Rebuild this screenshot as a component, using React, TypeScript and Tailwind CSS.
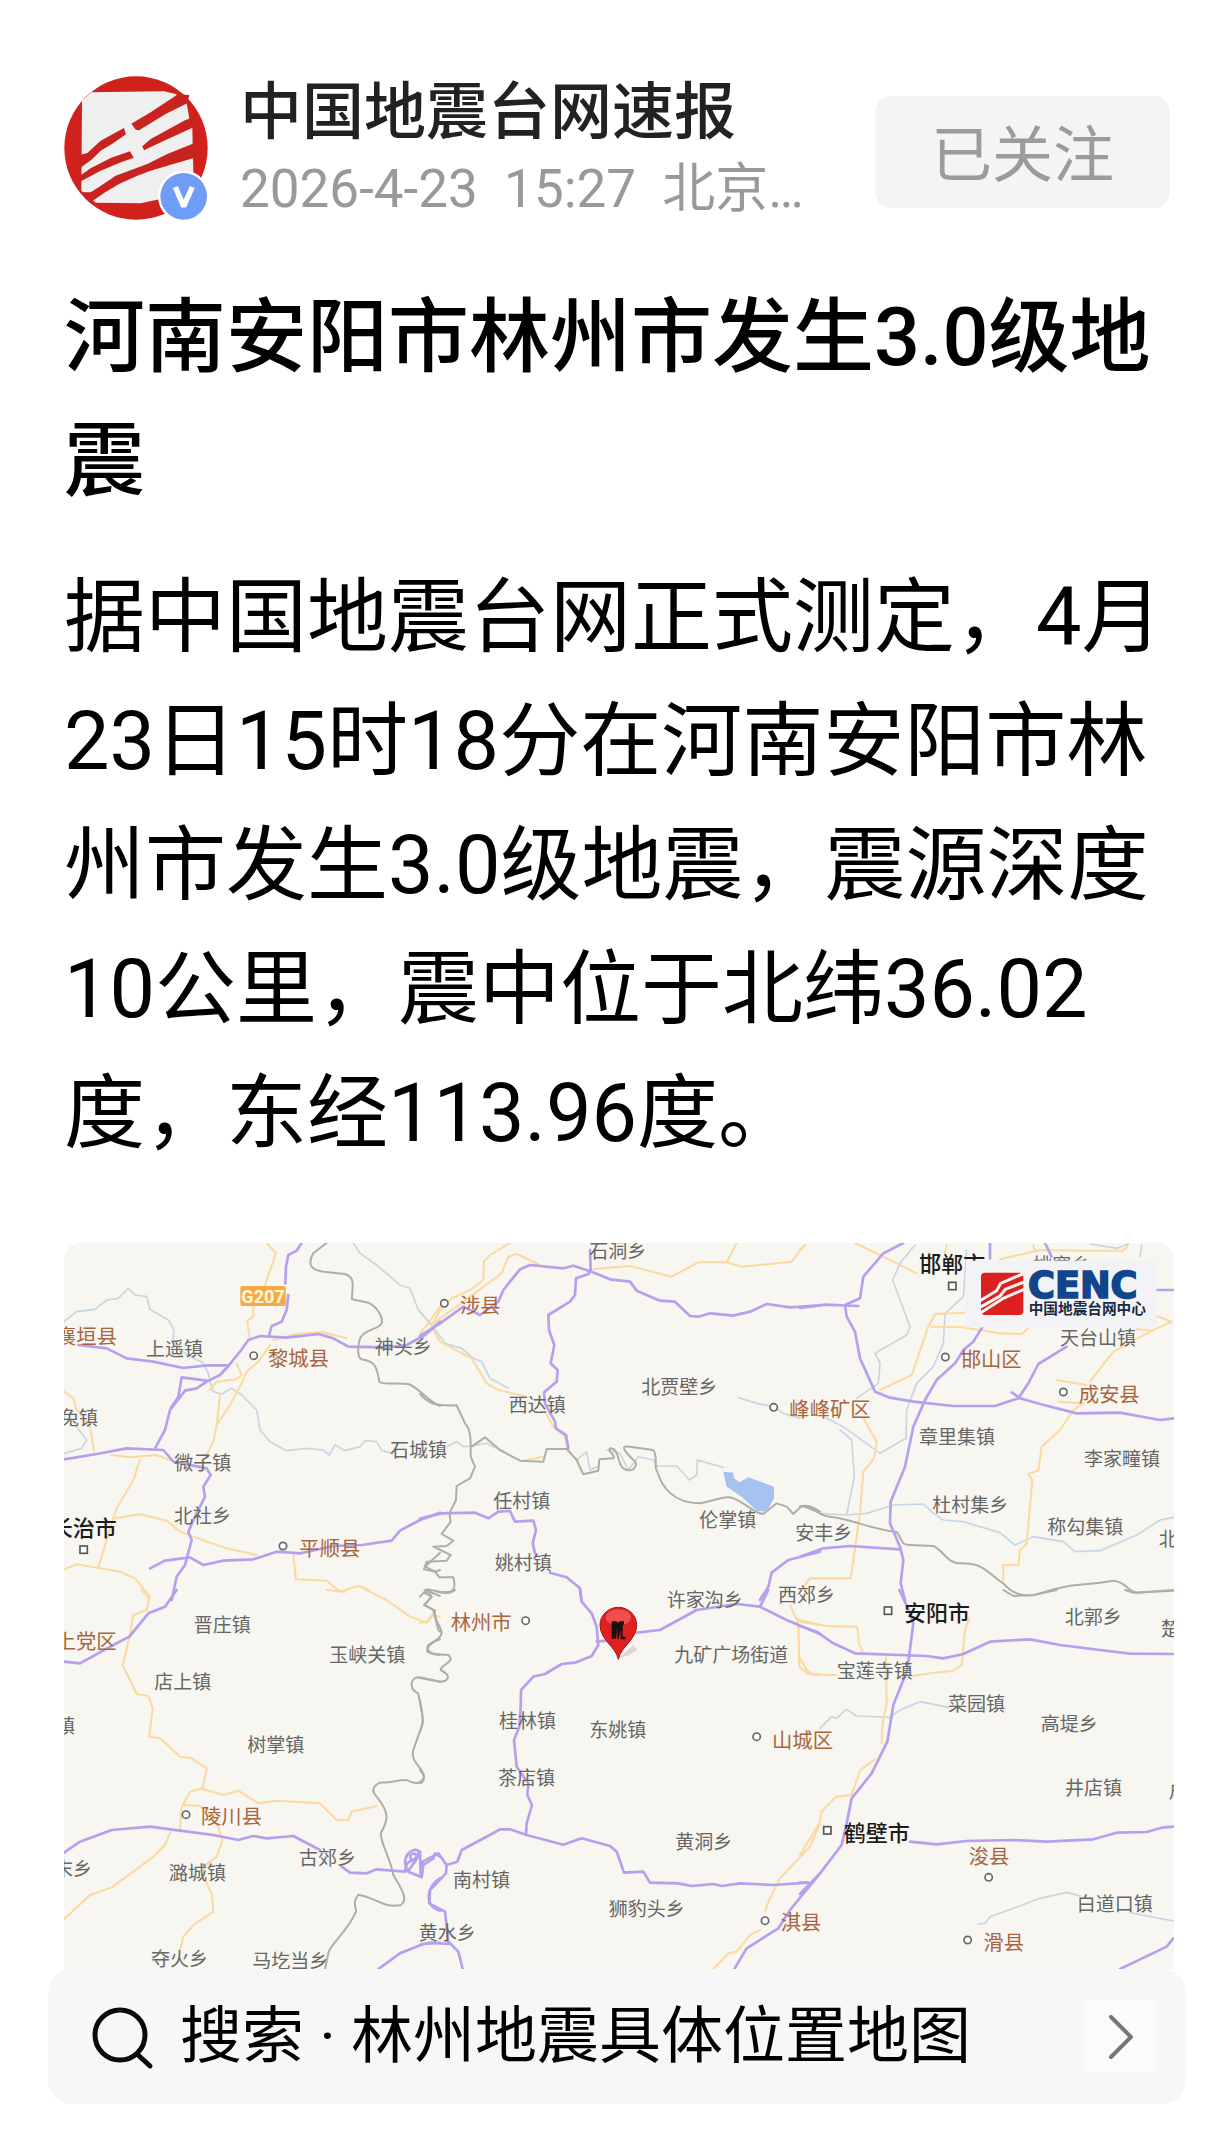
import { type ReactNode } from 'react';

type RoadKind = 'highway' | 'road' | 'border' | 'river';
type PlaceKind = 'town' | 'county' | 'city';

interface Line {
  kind: RoadKind;
  d: string;
}

interface Place {
  kind: PlaceKind;
  name: string;
  x: number;
  y: number;
}

interface Mark {
  shape: 'circle' | 'square';
  x: number;
  y: number;
}

interface Tile {
  id: string;
  x: number;
  y: number;
  lines: Line[];
  places: Place[];
  marks: Mark[];
}

const lineStyle: Record<RoadKind, string> = {
  highway: 'stroke-[#b6a0ee] stroke-[8px]',
  road: 'stroke-[#fbd9a0] stroke-[6px]',
  border: 'stroke-[#aeafa4] stroke-[6px]',
  river: 'stroke-[#c8d6e4] stroke-[5px]',
};

const placeStyle: Record<PlaceKind, string> = {
  town: 'fill-[#666666] text-[57px]',
  county: 'fill-[#a8653f] text-[61px]',
  city: 'fill-[#1c1c1c] text-[66px] font-medium',
};

const lineOrder: RoadKind[] = ['river', 'road', 'border', 'highway'];

const tiles: Tile[] = [
  {
    id: 'nw',
    x: -72,
    y: -39,
    lines: [
      { kind: 'river', d: 'M72 275L110 245L165 238L200 210L235 205L265 175L285 195L320 200L330 238L385 270L402 300L398 335L440 375L490 398L505 430L512 460L520 485L545 492L575 475L605 495L650 540L660 600L690 635L740 662L800 655L850 660L868 675L885 645L915 662L960 650L975 632L1010 635L1025 662L1050 668' },
      { kind: 'river', d: 'M940 39L960 70L1010 105L1080 165L1110 175L1135 240L1170 280' },
      { kind: 'river', d: 'M110 590L140 630L125 655L72 670' },
      { kind: 'road', d: 'M680 39L708 70L690 120L675 165M640 230L640 260L622 272L628 320' },
      { kind: 'road', d: 'M1200 230L1165 280L1140 310' },
      { kind: 'road', d: 'M700 330L770 312L845 306L920 325M690 345L655 395L620 425L605 460L570 525L530 585L520 635L500 675M540 490L530 590' },
      { kind: 'road', d: 'M590 400L605 435L590 448L530 455L510 480' },
      { kind: 'road', d: 'M72 485L100 505L108 535L150 590L162 665M215 675L270 682L350 675L400 695M300 690L280 750L230 835L218 870L200 930L175 1012' },
      { kind: 'road', d: 'M225 865L300 853L380 872L420 905L500 935L560 955L650 975' },
      { kind: 'road', d: 'M72 1018L110 1003L175 1014L240 1025L285 1045L330 1100' },
      { kind: 'road', d: 'M760 975L768 1048L860 1052L900 1085' },
      { kind: 'road', d: 'M900 1085L955 1068L985 1080' },
      { kind: 'border', d: 'M860 39L820 70C800 105 815 120 850 125L915 132C950 145 935 170 936 208L985 218C1010 230 1030 260 1025 280C1015 300 975 295 960 325C950 360 955 385 965 388C1010 395 1010 415 1018 455C1030 465 1060 458 1105 462C1140 475 1165 515 1200 528' },
      { kind: 'border', d: 'M1200 968L1155 1010L1185 1025L1200 1020M1200 1098L1155 1080' },
      { kind: 'highway', d: 'M785 39L770 62L745 75L738 110L736 160M745 195L740 240L725 275L695 288L687 318' },
      { kind: 'highway', d: 'M115 345L200 355L260 385L340 395L430 414L500 406L565 406' },
      { kind: 'highway', d: 'M1200 275L1155 315L1100 345L1040 352L925 350L880 325L835 312L740 323L660 318L625 330L600 365L565 408L540 435L500 455L470 475L435 482L390 540L375 600L345 655' },
      { kind: 'highway', d: 'M500 452L425 442L415 500L392 535' },
      { kind: 'highway', d: 'M72 688L170 672L260 655L370 660L400 695L500 715L512 735L490 770L495 800L465 860L445 905L455 930L435 1005L410 1040L395 1110' },
      { kind: 'highway', d: 'M330 1015L375 992L450 982L490 1005L550 992L640 988L710 965L780 970L880 948L965 945L1055 932L1080 902L1140 870L1200 848' },
    ],
    places: [
      { kind: 'county', name: '襄垣县', x: 48, y: 322 },
      { kind: 'town', name: '上遥镇', x: 318, y: 358 },
      { kind: 'county', name: '黎城县', x: 684, y: 386 },
      { kind: 'town', name: '神头乡', x: 1004, y: 350 },
      { kind: 'town', name: '兔镇', x: 60, y: 565 },
      { kind: 'town', name: '微子镇', x: 403, y: 699 },
      { kind: 'town', name: '石城镇', x: 1050, y: 660 },
      { kind: 'town', name: '北社乡', x: 402, y: 858 },
      { kind: 'city', name: '长治市', x: 32, y: 896 },
      { kind: 'county', name: '平顺县', x: 778, y: 957 },
    ],
    marks: [
      { shape: 'circle', x: 641, y: 377 },
      { shape: 'square', x: 131, y: 959 },
      { shape: 'circle', x: 729, y: 948 },
    ],
  },
  {
    id: 'n',
    x: 1068,
    y: -39,
    lines: [
      { kind: 'river', d: 'M0 245L35 285L75 340L125 355L160 385L185 395L210 445L265 475' },
      { kind: 'river', d: 'M80 650L110 635L130 650L155 648L200 640L250 665' },
      { kind: 'river', d: 'M470 690L500 665L510 720L530 710M560 660L600 670L625 720L655 680L700 690L712 708L770 708L808 750L830 735L832 690L910 712' },
      { kind: 'river', d: 'M955 502L1010 520L1060 530L1090 550L1140 565' },
      { kind: 'road', d: 'M270 39L210 75L192 95L190 150L150 180L95 205L60 240L35 290L60 335L155 385L200 460L235 480L320 500' },
      { kind: 'road', d: 'M40 280L130 215L245 130L265 80L290 72L360 105M515 118L630 108L755 140L835 97L920 97L965 110L1115 95L1150 50M950 39L920 97' },
      { kind: 'road', d: 'M375 545L400 590L435 620L440 650M310 692L370 680' },
      { kind: 'road', d: 'M1150 1070L1170 1045L1200 1045' },
      { kind: 'border', d: 'M0 492C30 525 50 528 110 526L135 580C155 600 152 640 152 680L165 710L150 745L110 768L108 810L88 850L92 875L65 912L100 932L80 948L40 950L92 975L80 992L20 995L12 1018L45 1025L58 1042L100 1042C110 1080 100 1090 60 1085L20 1078L0 1100' },
      { kind: 'border', d: 'M155 650L195 622L240 660L300 692L370 695L380 657L440 657L470 690L490 733L535 722L538 688L580 685C590 675 560 665 570 655C600 655 590 700 610 715C640 735 660 700 640 690C600 650 605 645 640 652L700 660C715 680 700 710 712 725C725 770 760 820 840 820C890 810 920 795 940 805C980 820 1000 850 1030 852L1070 820L1100 830L1120 852L1145 828C1170 825 1185 835 1200 845' },
      { kind: 'highway', d: 'M0 318L60 280L130 230L180 255L235 215L250 180L300 118L330 105L430 115L460 107L515 125L570 148L630 155L650 182L720 212L765 215L810 258L835 260L870 250L940 257L990 245L1040 222L1110 232L1200 226' },
      { kind: 'highway', d: 'M510 60L512 122L505 132L468 145L465 195L450 215L385 255L387 300L403 345L392 400L413 420L410 455L372 487L375 520L405 575L408 595L438 615L445 655' },
      { kind: 'highway', d: 'M0 866L65 850L165 848L205 865L235 845L270 843L285 875L340 872L348 900L338 940L345 970M390 1028L440 1042L480 1075L484 1110' },
      { kind: 'highway', d: 'M1200 965L1105 990L1055 1028L1045 1070L1020 1110' },
    ],
    places: [
      { kind: 'town', name: '石洞乡', x: 508, y: 64 },
      { kind: 'county', name: '涉县', x: 120, y: 228 },
      { kind: 'town', name: '西达镇', x: 266, y: 524 },
      { kind: 'town', name: '北贾壁乡', x: 664, y: 470 },
      { kind: 'county', name: '峰峰矿区', x: 1108, y: 541 },
      { kind: 'town', name: '任村镇', x: 220, y: 814 },
      { kind: 'town', name: '伦掌镇', x: 838, y: 870 },
      { kind: 'town', name: '姚村镇', x: 224, y: 999 },
      { kind: 'town', name: '安丰乡', x: 1126, y: 909 },
      { kind: 'town', name: '许家沟乡', x: 740, y: 1110 },
      { kind: 'town', name: '西郊乡', x: 1074, y: 1094 },
    ],
    marks: [
      { shape: 'circle', x: 73, y: 220 },
      { shape: 'circle', x: 1061, y: 532 },
    ],
  },
  {
    id: 'ne',
    x: 2208,
    y: -39,
    lines: [
      { kind: 'river', d: 'M345 45L300 100L278 150L330 290L320 315L225 370L240 400L235 460L170 505' },
      { kind: 'river', d: 'M500 60L490 200L435 250L430 340L400 410L350 460L320 540L318 625L240 670L130 590L80 565M120 600L155 630L163 740L140 855L60 850M140 855L200 850L280 825L370 822L400 850L430 870L490 875L600 908L645 945L700 920L790 935L825 965L900 962L1010 915L1080 870L1120 862' },
      { kind: 'river', d: 'M870 42L950 55L985 42M1025 45L1020 80' },
      { kind: 'road', d: 'M165 39L280 95L350 130M440 45L435 70M500 248L405 252L385 290L335 435L240 480M395 290L490 292L600 310L665 312L685 295M600 88L720 60L850 62L970 62L985 45M700 45L705 65' },
      { kind: 'road', d: 'M0 60L15 45M190 565L230 635L222 685L190 725L180 850L152 1045L30 1045L0 1085' },
      { kind: 'road', d: 'M1070 258L1115 275L1050 305L940 365L870 455M1010 298L1060 302M770 450L860 465M775 515L850 520L820 540L780 600L725 650L715 722L685 732L697 750L680 940L660 960L655 1005L610 1005L610 1050' },
      { kind: 'border', d: 'M0 828C40 830 60 860 90 860C150 865 220 900 290 906C310 930 300 945 330 945L400 948C430 960 440 1000 480 1000C560 1000 560 1030 610 1060C640 1095 680 1105 720 1090C830 1055 840 1070 940 1052C980 1055 980 1085 1010 1088L1120 1080' },
      { kind: 'highway', d: 'M0 234L75 224L175 228M310 39L250 70L190 140L180 205L135 225L140 260L165 305L180 385L225 485L270 503L340 515L460 528L585 528L655 505L685 460L715 402L800 350' },
      { kind: 'highway', d: 'M548 290L520 335L490 360L465 400L410 450L375 510L340 590L315 710L272 815L270 880L300 950L310 990L302 1060L315 1110' },
      { kind: 'highway', d: 'M635 487L660 505L720 522L830 550L960 548L1080 570L1120 565M1070 180L1120 180M735 39L755 80M570 39L570 85M0 980L70 955L150 948L300 958' },
    ],
    places: [
      { kind: 'city', name: '邯郸市', x: 358, y: 105 },
      { kind: 'town', name: '姚寨乡', x: 700, y: 104 },
      { kind: 'town', name: '天台山镇', x: 780, y: 325 },
      { kind: 'county', name: '邯山区', x: 482, y: 389 },
      { kind: 'county', name: '成安县', x: 836, y: 496 },
      { kind: 'town', name: '章里集镇', x: 357, y: 620 },
      { kind: 'town', name: '李家疃镇', x: 852, y: 686 },
      { kind: 'town', name: '杜村集乡', x: 397, y: 826 },
      { kind: 'town', name: '称勾集镇', x: 742, y: 891 },
      { kind: 'town', name: '北', x: 1076, y: 928 },
    ],
    marks: [
      { shape: 'square', x: 457, y: 168 },
      { shape: 'circle', x: 436, y: 381 },
      { shape: 'circle', x: 790, y: 486 },
    ],
  },
  {
    id: 'sw',
    x: -72,
    y: 1041,
    lines: [
      { kind: 'road', d: 'M305 0L328 25L320 60L280 75L268 145L248 225L290 312L325 318L338 355L328 440L360 445L420 500L455 505L500 535L488 595L450 605L425 650L420 720M980 0L1040 30L1110 80L1160 98L1180 75L1200 80M860 0L915 5' },
      { kind: 'road', d: 'M72 988L150 915L215 892L280 845L340 800L375 765L392 725M480 595L550 615L595 602L655 640L710 632L840 640L890 690L925 690L935 665L1010 648' },
      { kind: 'road', d: 'M430 645L480 648L530 700L548 750L530 800L490 830L495 870L515 910L520 965L460 1005L430 1040L420 1080' },
      { kind: 'border', d: 'M1160 0L1175 20L1155 45L1180 60L1195 120L1200 125M1200 148C1175 155 1160 170 1162 185C1180 195 1190 195 1200 194M1200 275L1130 262C1110 270 1108 300 1135 310C1140 350 1150 370 1148 400L1120 480C1110 520 1150 530 1152 560C1145 585 1120 582 1100 570C1060 570 1070 578 1020 578C995 590 995 605 1010 620C1050 670 1045 690 1022 730C1025 770 1050 800 1060 855C1080 890 1110 930 1080 946C1030 955 1000 920 955 914C935 940 950 950 948 965C920 1030 870 1060 865 1090L855 1137' },
      { kind: 'highway', d: 'M410 0L375 50L325 70L268 140L220 165L120 220L72 215' },
      { kind: 'highway', d: 'M72 788L120 755L215 720L330 710L420 722L520 735L595 750L640 738L680 745L760 738L840 780M905 830L930 848L980 850L1010 838L1095 845C1100 800 1120 820 1130 800C1130 785 1105 790 1112 805M1105 845C1080 810 1110 770 1135 782C1140 810 1110 825 1105 845L1145 862L1150 825L1180 805L1185 790L1200 800M1200 865C1160 885 1150 950 1200 962M1015 1137L1080 1090L1150 1062L1200 1058' },
    ],
    places: [
      { kind: 'town', name: '晋庄镇', x: 461, y: 104 },
      { kind: 'county', name: '上党区', x: 47, y: 156 },
      { kind: 'town', name: '玉峡关镇', x: 868, y: 196 },
      { kind: 'town', name: '店上镇', x: 343, y: 276 },
      { kind: 'town', name: '镇', x: 48, y: 408 },
      { kind: 'town', name: '树掌镇', x: 622, y: 464 },
      { kind: 'county', name: '陵川县', x: 483, y: 682 },
      { kind: 'town', name: '古郊乡', x: 777, y: 805 },
      { kind: 'town', name: '末乡', x: 42, y: 838 },
      { kind: 'town', name: '潞城镇', x: 387, y: 850 },
      { kind: 'town', name: '夺火乡', x: 333, y: 1108 },
      { kind: 'town', name: '马圪当乡', x: 637, y: 1112 },
    ],
    marks: [{ shape: 'circle', x: 438, y: 674 }],
  },
  {
    id: 's',
    x: 1068,
    y: 1041,
    lines: [
      { kind: 'road', d: 'M0 98L20 95L40 70M1110 45L1135 100L1138 230L1165 252L1200 252M1130 88L1200 105M1200 700L1170 770L1080 865L1050 925L1035 965M1020 1020L990 1035L950 1085L925 1090L880 1137' },
      { kind: 'border', d: 'M30 0L15 10L35 20L12 45L45 62C40 90 65 110 65 130C55 160 20 155 22 175C30 200 60 190 85 195C110 215 60 225 62 240C100 260 80 275 60 275L0 262M50 5C80 15 100 5 105 0M0 330C10 390 12 395 0 425M0 540C18 560 12 575 0 580' },
      { kind: 'highway', d: 'M480 0L485 35L515 70L530 110L535 165L515 198L465 218L425 222L375 252L340 260L303 300L302 350L298 410L282 450L290 530L325 580L322 615L336 645L320 700L318 735' },
      { kind: 'highway', d: 'M530 155L560 152M650 128L720 120L830 60L950 42L1020 50L1100 90L1200 132M1020 50L1045 0' },
      { kind: 'highway', d: 'M0 785L2 855L8 815L55 790L80 825L112 815L125 780L215 732L240 718L270 718L320 735L430 764L485 745L570 768L590 785L612 848L670 845L690 878L775 880L815 888L880 882L905 888L960 880L1060 885L1165 878' },
      { kind: 'highway', d: 'M80 825L78 850L30 900L28 940L75 965L85 1055L115 1085L128 1137M0 1065L30 1058L85 1062M1200 850L1110 960L1075 1015L980 1075L943 1137' },
    ],
    places: [
      { kind: 'county', name: '林州市', x: 92, y: 99 },
      { kind: 'town', name: '九矿广场街道', x: 763, y: 194 },
      { kind: 'town', name: '桂林镇', x: 237, y: 392 },
      { kind: 'town', name: '东姚镇', x: 508, y: 419 },
      { kind: 'county', name: '山城区', x: 1056, y: 452 },
      { kind: 'town', name: '茶店镇', x: 234, y: 565 },
      { kind: 'town', name: '黄洞乡', x: 766, y: 757 },
      { kind: 'town', name: '南村镇', x: 99, y: 871 },
      { kind: 'town', name: '狮豹头乡', x: 566, y: 957 },
      { kind: 'town', name: '黄水乡', x: -4, y: 1030 },
      { kind: 'county', name: '淇县', x: 1082, y: 999 },
    ],
    marks: [
      { shape: 'circle', x: 317, y: 92 },
      { shape: 'circle', x: 1010, y: 440 },
      { shape: 'circle', x: 1035, y: 992 },
    ],
  },
  {
    id: 'se',
    x: 2208,
    y: 1041,
    lines: [
      { kind: 'river', d: 'M60 415L95 380L110 385L138 358L170 378L270 382L300 360L360 335L445 352M535 1002L555 1000L570 980L640 955L720 925L800 907L840 918M990 968L1120 993' },
      { kind: 'road', d: 'M0 95L80 108L172 110L178 165L188 182M0 205L20 240L40 254L110 255M340 258L390 250L460 242L485 225L495 120L508 85M258 200L260 340L248 400L245 460M225 508L180 540L155 615L108 620L65 665L58 700L0 795' },
      { kind: 'border', d: 'M610 0L640 18L700 15L770 0M975 0L1000 8L1120 2' },
      { kind: 'highway', d: 'M0 108L50 125L100 160L165 190L380 198L430 205L490 192L570 155L690 148L780 165L900 180L990 191L1120 192' },
      { kind: 'highway', d: 'M298 0L322 50L340 100L322 240L280 345L262 455L215 550L155 625L140 700L125 765L60 850L0 912M330 755L410 763L500 753L640 750L740 755L880 748L950 728L1040 726L1085 713L1120 710M960 1137L1000 1118L1100 1070L1120 1045M0 878L20 878' },
    ],
    places: [
      { kind: 'city', name: '安阳市', x: 312, y: 73 },
      { kind: 'town', name: '北郭乡', x: 794, y: 82 },
      { kind: 'town', name: '楚', x: 1083, y: 116 },
      { kind: 'town', name: '宝莲寺镇', x: 110, y: 243 },
      { kind: 'town', name: '菜园镇', x: 444, y: 342 },
      { kind: 'town', name: '高堤乡', x: 722, y: 403 },
      { kind: 'town', name: '井店镇', x: 795, y: 595 },
      { kind: 'town', name: '户', x: 1106, y: 602 },
      { kind: 'city', name: '鹤壁市', x: 131, y: 732 },
      { kind: 'county', name: '浚县', x: 506, y: 800 },
      { kind: 'town', name: '白道口镇', x: 830, y: 943 },
      { kind: 'county', name: '滑县', x: 550, y: 1060 },
    ],
    marks: [
      { shape: 'square', x: 264, y: 62 },
      { shape: 'square', x: 82, y: 721 },
      { shape: 'circle', x: 566, y: 862 },
      { shape: 'circle', x: 503, y: 1050 },
    ],
  },
];

export default function App() {
  return (
    <main className="min-h-screen bg-white pt-[76px] pr-6 pb-[47px] pl-12 font-['Roboto','Noto_Sans_CJK_SC',sans-serif] text-black">
      <article className="pr-3 pl-4">
        <PostHeader />
        <h1 className="mt-12 text-[81px] leading-[124px] font-medium">
          河南安阳市林州市发生3.0级地震
        </h1>
        <p className="mt-8 text-[81px] leading-[124px]">
          据中国地震台网正式测定，4月23日15时18分在河南安阳市林州市发生3.0级地震，震源深度10公里，震中位于北纬36.02度，东经113.96度。
        </p>
        <EpicenterMap />
      </article>
      <SearchLink>搜索 · 林州地震具体位置地图</SearchLink>
    </main>
  );
}

function PostHeader() {
  return (
    <header className="flex items-start gap-8">
      <Avatar />
      <div className="min-w-0 flex-1">
        <div className="truncate text-[62px] leading-[74px] font-medium text-[#222222]">中国地震台网速报</div>
        <div className="whitespace-pre text-[53px] leading-[78px] text-[#999999]">2026-4-23  15:27  北京…</div>
      </div>
      <button
        type="button"
        className="mr-1 h-[112px] w-[295px] flex-shrink-0 self-center rounded-2xl bg-[#f3f4f6] pt-2 text-[61px] leading-[80px] text-[#999b9c]"
      >
        已关注
      </button>
    </header>
  );
}

function Avatar() {
  return (
    <svg viewBox="0 0 432 432" className="h-36 w-36 flex-shrink-0" role="img" aria-label="中国地震台网速报">
      <circle cx="216" cy="216" r="215" fill="#d0211c" />
      <g transform="translate(-70 -51)">
        <path
          d="M124 125L152 100L370 97L405 105L438 133L446 178L455 205L456 255L458 330L456 400L300 433L165 431L122 395Z"
          fill="#efefef"
        />
        <g fill="#c9231f">
          <path d="M412 106L446 108L440 133L375 165L295 214L285 212L272 194L330 160Z" />
          <path d="M118 288L140 282L180 245L250 207L256 226L215 254L180 275L155 300L118 328Z" />
          <path d="M462 172L462 203L400 232L370 245L310 274L305 262L330 240L370 218L430 185Z" />
          <path d="M116 352L150 328L210 297L268 277L279 296L235 312L180 335L118 368Z" />
          <path d="M462 252L462 296L380 320L330 335L290 350L235 375L190 402L152 428L118 400L150 400L175 384L225 350L320 315L380 285Z" />
        </g>
      </g>
      <circle cx="359" cy="361" r="77" fill="#ffffff" />
      <circle cx="359" cy="361" r="70" fill="#6e9cf7" />
      <path d="M334 333L359 391L385 333" fill="none" stroke="#ffffff" strokeWidth="16" strokeLinejoin="bevel" />
    </svg>
  );
}

function EpicenterMap() {
  return (
    <svg
      viewBox="0 0 3330 2178"
      className="mt-[67px] block h-auto w-full rounded-t-2xl"
      role="img"
      aria-label="震中位置地图"
    >
      <rect width="3330" height="2178" fill="#f7f6f0" />
      {lineOrder.map((kind) =>
        tiles.map((tile) => (
          <g key={`${kind}-${tile.id}`} transform={`translate(${tile.x} ${tile.y})`}>
            {tile.lines
              .filter((line) => line.kind === kind)
              .map((line) => (
                <path
                  key={line.d}
                  d={line.d}
                  fill="none"
                  strokeLinecap="round"
                  strokeLinejoin="round"
                  className={lineStyle[kind]}
                />
              ))}
          </g>
        ))
      )}
      {/* Reservoir */}
      <path
        transform="translate(1068 -39)"
        d="M910 725L940 728L942 745L958 757L985 742L1062 770L1062 805L1040 845L1010 842L965 800L920 770Z"
        fill="#a6c2f0"
      />
      {tiles.map((tile) => (
        <TileLabels key={tile.id} tile={tile} />
      ))}
      {/* Road number */}
      <g transform="translate(-72 -39)">
        <rect x="601" y="168" width="136" height="60" rx="6" fill="#f4ab45" />
        <text x="669" y="218" textAnchor="middle" className="fill-[#fff6dc] text-[54px] font-bold">
          G207
        </text>
      </g>
      <CencLogo />
      <Pin />
    </svg>
  );
}

function TileLabels({ tile }: { tile: Tile }) {
  return (
    <g transform={`translate(${tile.x} ${tile.y})`}>
      {tile.marks.map((mark) =>
        mark.shape === 'circle' ? (
          <circle key={`${mark.x}-${mark.y}`} cx={mark.x} cy={mark.y} r="11" fill="#ffffff" stroke="#666666" strokeWidth="5" />
        ) : (
          <rect
            key={`${mark.x}-${mark.y}`}
            x={mark.x - 11}
            y={mark.y - 11}
            width="22"
            height="22"
            fill="#ffffff"
            stroke="#555555"
            strokeWidth="5"
          />
        )
      )}
      {tile.places.map((place) => (
        <text
          key={`${place.name}-${place.x}`}
          x={place.x}
          y={place.y + 21}
          className={placeStyle[place.kind]}
        >
          {place.name}
        </text>
      ))}
    </g>
  );
}

function CencLogo() {
  return (
    <g transform="translate(2208 -39)">
      <rect x="497" y="92" width="573" height="200" fill="#f3f3f5" />
      <rect x="543" y="128" width="127" height="127" rx="12" fill="#dc1f1f" />
      <g fill="none" stroke="#f7f3f3" strokeWidth="9">
        <path d="M540 212L590 182L602 160L668 132" />
        <path d="M540 232L600 198L616 178L672 156" />
        <path d="M540 250L610 205L672 178" />
      </g>
      <text
        x="684"
        y="204"
        className="fill-[#12468c] stroke-[#12468c] stroke-[5px] font-['DejaVu_Sans',sans-serif] text-[110px] font-bold"
      >
        CENC
      </text>
      <text x="686" y="251" className="fill-[#1b2a44] text-[44px] font-bold">
        中国地震台网中心
      </text>
    </g>
  );
}

function Pin() {
  return (
    <g transform="translate(1068 1041)">
      <path d="M595 205L640 165L652 180L620 198Z" fill="#d9d8d2" />
      <path
        d="M595 208C588 170 540 150 540 105A55 53 0 0 1 650 105C650 150 602 170 595 208Z"
        fill="#e0201f"
        stroke="#a31414"
        strokeWidth="3"
      />
      <ellipse cx="595" cy="82" rx="38" ry="24" fill="#f0504c" />
      <path
        d="M575 94H590L594 100L598 94H612V104H608V140H616V148H602V118L596 146H592V110L588 146H575Z"
        fill="#161010"
      />
    </g>
  );
}

function SearchLink({ children }: { children: ReactNode }) {
  return (
    <a href="#search" className="flex h-[135px] items-center rounded-3xl bg-[#f7f7f7] pr-[29px] pl-[42px]">
      <svg viewBox="0 0 66 66" className="h-[66px] w-[66px] flex-shrink-0" fill="none" stroke="#0a0a0a" strokeWidth="5" aria-hidden="true">
        <circle cx="30" cy="31" r="25" />
        <path d="M47 50L60 62" strokeLinecap="round" />
      </svg>
      <span className="ml-6 flex-1 truncate text-[62px] leading-[80px]">{children}</span>
      <span className="flex h-[72px] w-[72px] flex-shrink-0 items-center justify-center bg-[#fafbfd]">
        <svg viewBox="0 0 24 44" className="h-11 w-6" fill="none" stroke="#777777" strokeWidth="4" strokeLinecap="round" aria-hidden="true">
          <path d="M2 2L22 22L2 42" />
        </svg>
      </span>
    </a>
  );
}
